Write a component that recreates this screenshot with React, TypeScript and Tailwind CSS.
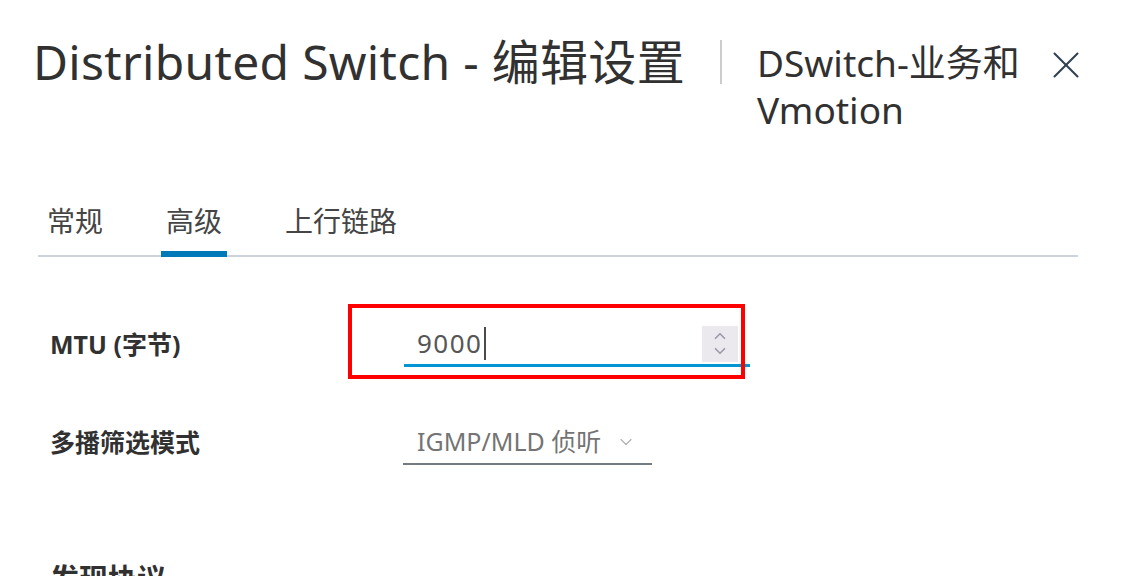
import { X, ChevronDown, ChevronUp } from 'lucide-react';

const tabs = ['常规', '高级', '上行链路'];

const App = () => {
  const active = 1;

  return (
    <main className="w-[1132px] h-[576px] overflow-hidden bg-white text-[#313131] font-['Noto_Sans','Noto_Sans_CJK_SC',sans-serif]">
      {/* 标题栏 */}
      <header className="flex items-start pt-[30px] pl-[33px]">
        <h1 className="text-[48px] leading-[64px] font-normal tracking-[0.3px] whitespace-nowrap">
          Distributed Switch - 编辑设置
        </h1>
        <div className="w-[2px] h-[44px] bg-[#cccccc] ml-[35px] mt-[10px]" />
        <div className="ml-[35px] mt-[9px] w-[282px] text-[37px] leading-[47px]">
          DSwitch-业务和 Vmotion
        </div>
        <button className="ml-[4px] mt-[12px] text-[#314351]">
          <X size={46} strokeWidth={1.1} />
        </button>
      </header>

      {/* 标签页 */}
      <nav className="ml-[38px] mr-[54px] mt-[70px] flex gap-[53px] border-b-2 border-[#ccd3da] pl-[4px]">
        {tabs.map((t, i) => (
          <div
            key={t}
            className={
              i === active
                ? 'px-[5px] pb-[12px] -mb-[2px] border-b-[6px] border-[#0079b8] text-[28px] leading-[36px] text-[#454545]'
                : 'px-[5px] pb-[12px] -mb-[2px] border-b-[6px] border-transparent text-[28px] leading-[36px] text-[#454545]'
            }
          >
            {t}
          </div>
        ))}
      </nav>

      {/* 表单 */}
      <section className="px-[50px] pt-[65px]">
        <div className="flex items-center h-[46px]">
          <label className="w-[354px] text-[25px] font-bold text-[#313131]">MTU (字节)</label>
          <div className="relative">
            <div className="flex items-center w-[346px] h-[44px] border-b-[3px] border-[#0095d3] pl-[13px]">
              <span className="text-[26px] tracking-[1.5px] text-[#565656]">9000</span>
              <span className="w-[2px] h-[33px] bg-[#4a4a4a] ml-[1px]" />
              <div className="ml-auto mr-[12px] w-[36px] h-[36px] bg-[#ece9ee] flex flex-col items-center justify-center text-[#9a99a8]">
                <ChevronUp size={18} strokeWidth={2.2} className="-mb-[3px]" />
                <ChevronDown size={18} strokeWidth={2.2} />
              </div>
            </div>
            <div className="absolute -left-[56px] -top-[19px] w-[397px] h-[75px] border-[4px] border-[#ff0000]" />
          </div>
        </div>

        <div className="flex items-center h-[46px] mt-[52px]">
          <label className="w-[353px] text-[25px] font-bold text-[#313131]">多播筛选模式</label>
          <div className="flex items-center w-[249px] h-[44px] border-b-[2px] border-[#737b83] pl-[14px]">
            <span className="text-[25px] text-[#747474]">IGMP/MLD 侦听</span>
            <ChevronDown size={20} strokeWidth={1.4} className="ml-[15px] text-[#b0b0b0]" />
          </div>
        </div>

        <h2 className="mt-[93px] text-[29px] font-bold leading-[40px] text-[#313131]">发现协议</h2>
      </section>
    </main>
  );
};

export default App;
